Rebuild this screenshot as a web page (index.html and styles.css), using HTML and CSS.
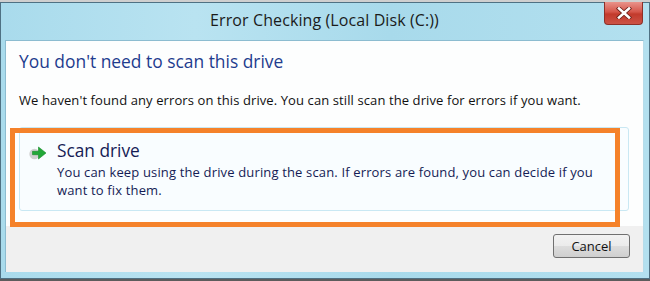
FILE: index.html
```html
<!DOCTYPE html>
<html>
<head>
<meta charset="utf-8">
<link rel="stylesheet" href="styles.css">
</head>
<body>
<div class="window">
  <div class="titlebar">
    <div class="title">Error Checking (Local Disk (C:))</div>
    <div class="close">
      <svg width="16" height="12" viewBox="0 0 16 12">
        <path d="M3 1.5 L13 10.5 M13 1.5 L3 10.5" stroke="#6b1f18" stroke-width="4.2" stroke-linecap="square"/>
        <path d="M3 1.5 L13 10.5 M13 1.5 L3 10.5" stroke="#ffffff" stroke-width="2.6" stroke-linecap="square"/>
      </svg>
    </div>
  </div>
  <div class="client">
    <div class="content">
      <h1 class="instruction">You don't need to scan this drive</h1>
      <p class="message">We haven't found any errors on this drive. You can still scan the drive for errors if you want.</p>
      <div class="cmdlink">
        <svg class="arrow" width="18" height="14" viewBox="0 0 18 14">
          <circle cx="5.5" cy="8" r="5.2" fill="#d0d0d0"/>
          <path d="M3.5 5.3 H9.5 V1 L17 7 L9.5 13 V8.7 H3.5 Z" fill="#22a838" stroke="#168a28" stroke-width="0.6"/>
        </svg>
        <div class="cmdtext">
          <div class="cmdtitle">Scan drive</div>
          <div class="cmddesc">You can keep using the drive during the scan. If errors are found, you can decide if you want to fix them.</div>
        </div>
      </div>
      <div class="highlight"></div>
    </div>
    <div class="footer">
      <button class="cancel">Cancel</button>
    </div>
  </div>
</div>
</body>
</html>
```
FILE: styles.css
```css
html, body {
  margin: 0;
  padding: 0;
}
body {
  width: 650px;
  height: 281px;
  background: linear-gradient(180deg, #cfcfcf 0, #cfcfcf 2px, #5c5c5c 2px);
  overflow: hidden;
  font-family: "Open Sans", "Noto Sans", sans-serif;
}
.window {
  margin-top: 2px;
  height: 277px;
  box-sizing: border-box;
  border: 1px solid #4f7183;
  background: linear-gradient(90deg, #a9dbec 0%, #b9e3f1 30%, #a8daeb 60%, #b3e0ef 100%);
  padding: 0 6px 6px 5px;
  display: flex;
  flex-direction: column;
}
.titlebar {
  height: 37px;
  flex: none;
  display: flex;
  justify-content: center;
  position: relative;
}
.title {
  margin-top: 6px;
  font-size: 16px;
  color: #1b1b1b;
  letter-spacing: 0.1px;
}
.close {
  position: absolute;
  right: 0;
  top: -1px;
  width: 39px;
  height: 23px;
  box-sizing: border-box;
  border: 1px solid #8d3028;
  border-top: none;
  border-radius: 0 0 4px 4px;
  background: linear-gradient(180deg, #e9938b 0%, #d5564a 45%, #c23a2c 55%, #cc5245 100%);
  display: flex;
  align-items: center;
  justify-content: center;
}
.client {
  flex: 1;
  display: flex;
  flex-direction: column;
  border: 1px solid #8cbcd0;
  border-right-color: #b6dcea;
  border-bottom: none;
  margin: 0 -1px 0 -1px;
}
.content {
  position: relative;
  height: 185px;
  background: #fdfefe;
  padding: 0 14px 0 13px;
  flex: none;
}
.instruction {
  margin: 0;
  padding-top: 9px;
  font-size: 17.4px;
  font-weight: normal;
  color: #1f3c8e;
  line-height: 22px;
}
.message {
  margin: 20px 0 0 0;
  font-size: 13px;
  line-height: 16px;
  color: #111;
  letter-spacing: 0.1px;
}
.cmdlink {
  margin-top: 19px;
  height: 84px;
  box-sizing: border-box;
  border: 1px solid #c9e8f3;
  border-radius: 3px;
  background: #f9fdff;
  display: flex;
  align-items: flex-start;
  padding: 0 0 0 9px;
}
.arrow {
  margin-top: 18px;
  flex: none;
}
.cmdtext {
  margin-left: 10px;
  padding-top: 13px;
}
.cmdtitle {
  font-size: 17.3px;
  line-height: 20px;
  color: #151c55;
}
.cmddesc {
  margin-top: 2px;
  font-size: 13px;
  line-height: 18px;
  color: #151c55;
  letter-spacing: 0.15px;
  width: 550px;
}
.highlight {
  position: absolute;
  left: 4px;
  top: 87px;
  width: 610px;
  height: 99px;
  box-sizing: border-box;
  border: 5px solid #f5822a;
}
.footer {
  flex: 1;
  background: #f0f0f0;
  display: flex;
  justify-content: flex-end;
  align-items: flex-start;
  padding: 8px 13px 0 0;
}
.cancel {
  width: 77px;
  height: 24px;
  box-sizing: border-box;
  border: 1px solid #707070;
  border-radius: 3px;
  background: linear-gradient(180deg, #f2f2f2 0%, #ebebeb 50%, #dddddd 51%, #cfcfcf 100%);
  font-family: "Open Sans", "Noto Sans", sans-serif;
  font-size: 13px;
  color: #111;
  padding: 0;
}
```
